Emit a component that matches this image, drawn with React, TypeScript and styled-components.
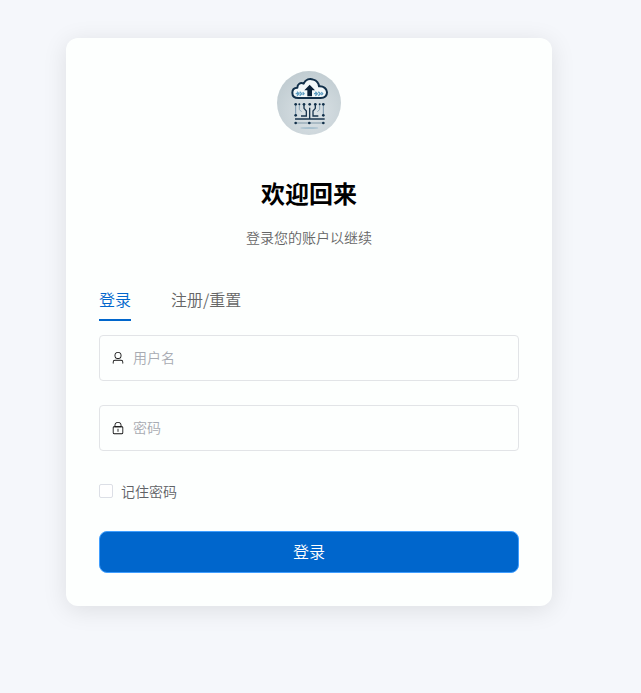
import React, { useState } from "react";
import styled, { createGlobalStyle } from "styled-components";

const GlobalStyle = createGlobalStyle`
  *, *::before, *::after { box-sizing: border-box; }
  body {
    margin: 0;
    background: #f5f7fb;
    font-family: "Noto Sans CJK SC", "Open Sans", sans-serif;
  }
`;

const Page = styled.main`
  display: flex;
  justify-content: center;
  padding: 38px 23px 38px 0;
`;

const Card = styled.section`
  width: 100%;
  max-width: 486px;
  padding: 33px;
  border-radius: 12px;
  background: #fdfffe;
  box-shadow: 0 4px 24px rgba(0, 0, 0, 0.1);
`;

const Header = styled.header`
  display: flex;
  flex-direction: column;
  align-items: center;
  text-align: center;
`;

const LogoSvg = styled.svg`
  width: 64px;
  height: 64px;
  border-radius: 50%;
`;

const Title = styled.h1`
  margin: 40px 0 0;
  font-size: 24px;
  line-height: 36px;
  font-weight: 700;
  color: #000;
`;

const Subtitle = styled.p`
  margin: 16px 0 0;
  font-size: 14px;
  line-height: 20px;
  font-weight: 350;
  color: #666;
`;

const Tabs = styled.div`
  display: flex;
  gap: 40px;
  margin-top: 32px;
`;

const Tab = styled.button<{ $active: boolean }>`
  height: 42px;
  padding: 0;
  border: 0;
  border-bottom: 2px solid ${(p) => (p.$active ? "#0066cc" : "transparent")};
  background: none;
  font: inherit;
  font-size: 16px;
  font-weight: 350;
  color: ${(p) => (p.$active ? "#0066cc" : "#666")};
  cursor: pointer;
`;

const Form = styled.form`
  display: flex;
  flex-direction: column;
  gap: 24px;
  margin-top: 14px;
`;

const Field = styled.label`
  display: flex;
  align-items: center;
  gap: 8px;
  height: 46px;
  padding: 0 11px;
  border: 1px solid #e2e4e7;
  border-radius: 4px;
  background: #fdfffe;
  color: #111;
`;

const Icon = styled.svg`
  flex: none;
  width: 14px;
  height: 14px;
  fill: currentColor;
`;

const TextInput = styled.input`
  flex: 1;
  min-width: 0;
  padding: 0 0 2px;
  border: 0;
  outline: 0;
  background: transparent;
  font: inherit;
  font-size: 14px;
  line-height: 20px;
  font-weight: 350;
  color: #444;

  &::placeholder { color: #a8abb2; }
`;

const Remember = styled.label`
  display: flex;
  align-items: center;
  align-self: flex-start;
  gap: 8px;
  height: 32px;
  font-size: 14px;
  line-height: 20px;
  font-weight: 350;
  color: #606266;
`;

const Checkbox = styled.input`
  appearance: none;
  width: 14px;
  height: 14px;
  margin: 0;
  border: 1px solid #dcdfe6;
  border-radius: 2px;
  background: #fff;

  &:checked { background: #0066cc; border-color: #0066cc; }
`;

const Submit = styled.button`
  height: 42px;
  padding: 0 0 2px;
  border: 1px solid #409eff;
  border-radius: 8px;
  background: #0066cc;
  font: inherit;
  font-size: 16px;
  font-weight: 350;
  color: #fff;
  cursor: pointer;
`;

const Logo = () => (
  <LogoSvg viewBox="24 24 192 192" role="img" aria-label="Logo">
    <defs>
      <radialGradient id="disc" cx="0.55" cy="0.65" r="0.7">
        <stop offset="0" stopColor="#dce3e7" />
        <stop offset="1" stopColor="#bfcbd0" />
      </radialGradient>
    </defs>
    <rect x="24" y="24" width="192" height="192" fill="url(#disc)" />
    <path
      d="M88 105 C76 105 70 98 70 89 C70 80 76 74 85 74 C85 64 94 57 104 62 C110 49 122 46 133 50 C143 53 149 61 150 70 C164 69 174 77 174 88 C174 99 166 105 155 105 Z"
      fill="#f2f8fa"
      stroke="#12304a"
      strokeWidth="6"
      strokeLinejoin="round"
    />
    <path d="M122 65 L138 82 H129 V100 H115 V82 H106 Z" fill="#0b2239" />
    <path
      d="M80 92h8M84 86l6 6-6 6M92 86l6 6-6 6M101 88l4 4-4 4M135 92h8M139 86l6 6-6 6M148 86l6 6-6 6M157 88l4 4-4 4"
      fill="none"
      stroke="#5d9cc0"
      strokeWidth="4"
    />
    <g fill="none" strokeWidth="4">
      <path d="M80 126v30M163 126v30" stroke="#7795aa" strokeWidth="3" />
      <path d="M91 126v14l7 6M152 126v14l-7 6" stroke="#8ba7b9" strokeWidth="3" />
      <path d="M105 124v12l7 8v15H96M139 124v12l-7 8v15h16" stroke="#19354e" />
      <path d="M122 134v34M78 168h89" stroke="#19354e" />
      <path d="M84 180h76" stroke="#8099a9" strokeWidth="3" />
    </g>
    <g fill="#12304a">
      <circle cx="80" cy="124" r="4" />
      <circle cx="91" cy="124" r="3" />
      <circle cx="105" cy="124" r="4" />
      <circle cx="122" cy="124" r="4" />
      <circle cx="139" cy="124" r="4" />
      <circle cx="152" cy="124" r="3" />
      <circle cx="163" cy="124" r="4" />
      <circle cx="80" cy="157" r="4" />
      <circle cx="163" cy="157" r="4" />
      <circle cx="80" cy="180" r="4" />
      <circle cx="121" cy="180" r="4" />
      <circle cx="163" cy="180" r="4" />
    </g>
    <ellipse cx="121" cy="195" rx="27" ry="3" fill="#a9c1cf" />
  </LogoSvg>
);

const UserIcon = () => (
  <Icon viewBox="0 0 1024 1024" aria-hidden="true">
    <path d="M512 512a192 192 0 1 0 0-384 192 192 0 0 0 0 384m0 64a256 256 0 1 1 0-512 256 256 0 0 1 0 512m320 320v-96a96 96 0 0 0-96-96H288a96 96 0 0 0-96 96v96a32 32 0 1 1-64 0v-96a160 160 0 0 1 160-160h448a160 160 0 0 1 160 160v96a32 32 0 1 1-64 0" />
  </Icon>
);

const LockIcon = () => (
  <Icon viewBox="0 0 1024 1024" aria-hidden="true">
    <path d="M224 448a32 32 0 0 0-32 32v384a32 32 0 0 0 32 32h576a32 32 0 0 0 32-32V480a32 32 0 0 0-32-32zm0-64h576a96 96 0 0 1 96 96v384a96 96 0 0 1-96 96H224a96 96 0 0 1-96-96V480a96 96 0 0 1 96-96" />
    <path d="M512 544a32 32 0 0 1 32 32v192a32 32 0 1 1-64 0V576a32 32 0 0 1 32-32m192-160v-64a192 192 0 1 0-384 0v64zM512 64a256 256 0 0 1 256 256v128H256V320A256 256 0 0 1 512 64" />
  </Icon>
);

const tabs = ["登录", "注册/重置"];

export default function App() {
  const [active, setActive] = useState(0);
  return (
    <>
      <GlobalStyle />
      <Page>
        <Card>
          <Header>
            <Logo />
            <Title>欢迎回来</Title>
            <Subtitle>登录您的账户以继续</Subtitle>
          </Header>
          <Tabs role="tablist">
            {tabs.map((name, i) => (
              <Tab
                key={name}
                type="button"
                role="tab"
                aria-selected={i === active}
                $active={i === active}
                onClick={() => setActive(i)}
              >
                {name}
              </Tab>
            ))}
          </Tabs>
          <Form onSubmit={(e: React.FormEvent) => e.preventDefault()}>
            <Field>
              <UserIcon />
              <TextInput type="text" placeholder="用户名" aria-label="用户名" />
            </Field>
            <Field>
              <LockIcon />
              <TextInput type="password" placeholder="密码" aria-label="密码" />
            </Field>
            <Remember>
              <Checkbox type="checkbox" />
              记住密码
            </Remember>
            <Submit type="submit">登录</Submit>
          </Form>
        </Card>
      </Page>
    </>
  );
}
